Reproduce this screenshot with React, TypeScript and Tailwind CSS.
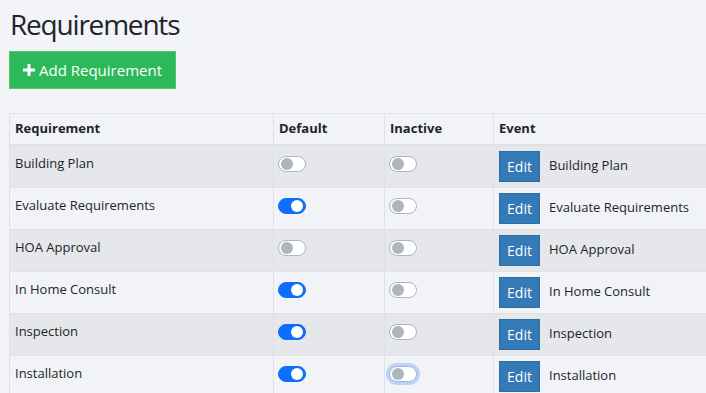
import React from "react";

const rows = [
  { name: "Building Plan", def: false, inactive: false },
  { name: "Evaluate Requirements", def: true, inactive: false },
  { name: "HOA Approval", def: false, inactive: false },
  { name: "In Home Consult", def: true, inactive: false },
  { name: "Inspection", def: true, inactive: false },
  { name: "Installation", def: true, inactive: false, focus: true },
];

function Toggle({ on, focus }: { on: boolean; focus?: boolean }) {
  return (
    <div
      className={
        "w-[28px] h-[16px] rounded-full border flex items-center px-[2px] " +
        (on
          ? "bg-[#0d6efd] border-[#0d6efd] justify-end"
          : "bg-white border-[#adb5bd] justify-start") +
        (focus ? " ring-[3px] ring-[#b6d4fe] border-[#86b7fe]" : "")
      }
    >
      <div className={"w-[12px] h-[12px] rounded-full " + (on ? "bg-white" : "bg-[#adb5bd]")} />
    </div>
  );
}

export default function App() {
  return (
    <div
      className="w-[706px] h-[393px] overflow-hidden bg-[#f3f4f8] text-[#212529] pl-[9px]"
      style={{ fontFamily: '"Open Sans", "Noto Sans", sans-serif' }}
    >
      <h1 className="text-[28px] leading-[36px] pt-[6px] pl-[1px] font-normal tracking-[-1.2px]">
        Requirements
      </h1>
      <button className="mt-[9px] h-[38px] w-[167px] bg-[#2db85a] border border-[#5cc36a] text-white text-[15px] flex items-center justify-center gap-[4px]">
        <svg width="12" height="12" viewBox="0 0 12 12">
          <path d="M4.5 0h3v4.5H12v3H7.5V12h-3V7.5H0v-3h4.5z" fill="white" />
        </svg>
        <span>Add Requirement</span>
      </button>
      <table className="mt-[24px] w-[780px] border-collapse text-[13px]">
        <colgroup>
          <col className="w-[264px]" />
          <col className="w-[111px]" />
          <col className="w-[109px]" />
          <col />
        </colgroup>
        <thead>
          <tr className="h-[31px] bg-[#f2f3f7]">
            {["Requirement", "Default", "Inactive", "Event"].map((h) => (
              <th
                key={h}
                className="border border-[#dee2e6] border-b-2 text-left font-bold px-[5px] align-middle"
              >
                {h}
              </th>
            ))}
          </tr>
        </thead>
        <tbody>
          {rows.map((r, i) => (
            <tr key={r.name} className={"h-[42px] " + (i % 2 === 0 ? "bg-[#e6e7eb]" : "bg-[#f2f3f7]")}>
              <td className="border border-[#dee2e6] px-[5px] align-top pt-[8px]">{r.name}</td>
              <td className="border border-[#dee2e6] px-[4px] align-top pt-[10px]">
                <Toggle on={r.def} />
              </td>
              <td className="border border-[#dee2e6] px-[4px] align-top pt-[10px]">
                <Toggle on={r.inactive} focus={r.focus} />
              </td>
              <td className="border border-[#dee2e6] px-[5px] align-top pt-[5px]">
                <div className="flex items-center gap-[9px] pb-[5px]">
                  <button className="w-[41px] h-[31px] bg-[#337ab7] border border-[#2e6da4] text-white text-[14px] flex items-center justify-center">
                    Edit
                  </button>
                  <span>{r.name}</span>
                </div>
              </td>
            </tr>
          ))}
        </tbody>
      </table>
    </div>
  );
}
